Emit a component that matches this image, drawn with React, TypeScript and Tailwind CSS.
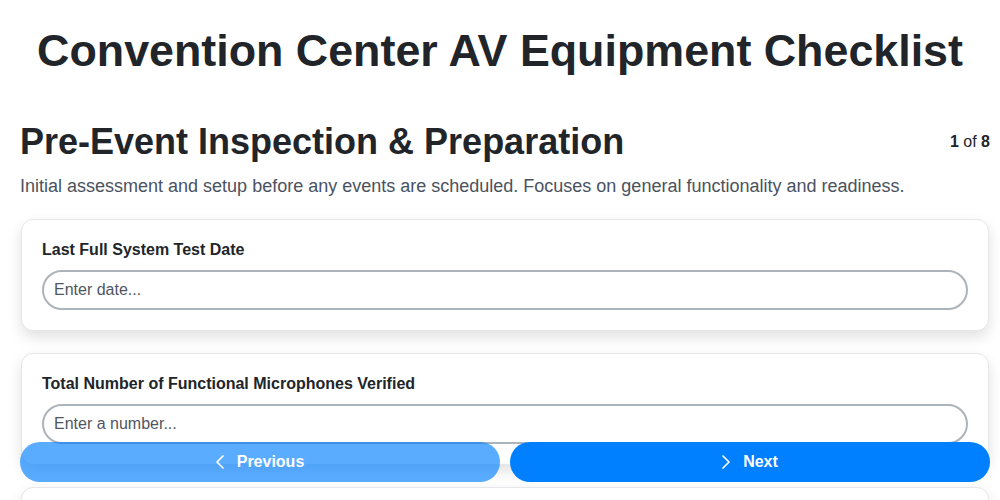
import React, { useState } from "react";
import { ChevronLeft, ChevronRight } from "lucide-react";

interface Field {
  id: string;
  label: string;
  placeholder: string;
  type: string;
}

const fields: Field[] = [
  { id: "test-date", label: "Last Full System Test Date", placeholder: "Enter date...", type: "text" },
  { id: "mics", label: "Total Number of Functional Microphones Verified", placeholder: "Enter a number...", type: "text" },
  { id: "projectors", label: "Projector Lamp Hours Checked", placeholder: "Enter a number...", type: "text" },
  { id: "notes", label: "Inspection Notes", placeholder: "Enter notes...", type: "text" },
];

const FieldCard: React.FC<{ field: Field }> = ({ field }) => {
  const [value, setValue] = useState("");
  return (
    <div className="bg-white rounded-xl border border-[#e5e7eb] shadow-[0_6px_14px_rgba(0,0,0,0.12)] p-5">
      <label htmlFor={field.id} className="block text-base font-bold leading-[1.2] text-[#212529] mb-[11px]">
        {field.label}
      </label>
      <input
        id={field.id}
        type={field.type}
        value={value}
        onChange={(e) => setValue(e.target.value)}
        placeholder={field.placeholder}
        className="block w-full h-10 rounded-full border-2 border-[#adb3ba] bg-white px-2.5 text-base text-[#212529] placeholder:text-[#50565f] outline-none"
      />
    </div>
  );
};

export default function App() {
  const step = 1;
  const total = 8;

  return (
    <div className="min-h-screen bg-white pb-24 font-['Liberation_Sans',Arial,sans-serif] text-[#212529]">
      <h1 className="pt-6 text-center text-[44.8px] font-bold leading-[1.2]">
        Convention Center AV Equipment Checklist
      </h1>

      <div className="pl-5 pr-2.5">
        <div className="mt-[44px] flex items-center justify-between">
          <h2 className="text-4xl font-bold">Pre-Event Inspection &amp; Preparation</h2>
          <span className="text-base">
            <b>{step}</b> of <b>{total}</b>
          </span>
        </div>
        <p className="mt-2.5 text-lg text-[#4a5260]">
          Initial assessment and setup before any events are scheduled. Focuses on general functionality and readiness.
        </p>

        <div className="mt-[19px] px-px flex flex-col gap-[22px]">
          {fields.map((f) => (
            <FieldCard key={f.id} field={f} />
          ))}
        </div>
      </div>

      <div className="fixed left-5 right-2.5 bottom-[18px] flex gap-2.5">
        <button className="flex-1 h-10 rounded-full bg-[#0080ff] opacity-[0.65] pr-2 text-white font-bold text-base flex items-center justify-center gap-[5px]">
          <ChevronLeft size={24} strokeWidth={1.75} />
          Previous
        </button>
        <button className="flex-1 h-10 rounded-full bg-[#0080ff] pr-2 text-white font-bold text-base flex items-center justify-center gap-[5px]">
          <ChevronRight size={24} strokeWidth={1.75} />
          Next
        </button>
      </div>
    </div>
  );
}
